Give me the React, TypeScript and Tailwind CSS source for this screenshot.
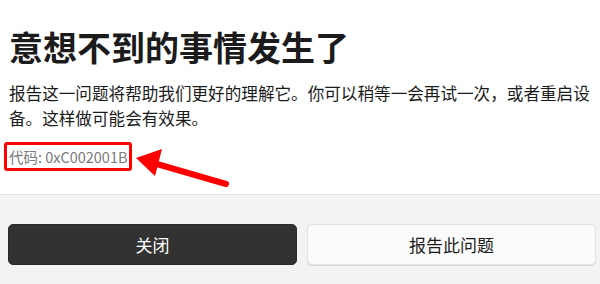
import React from "react";

export default function App() {
  const font = { fontFamily: '"Noto Sans CJK SC", "Noto Sans", sans-serif' };
  return (
    <div className="w-[600px] h-[284px] flex flex-col bg-white overflow-hidden" style={font}>
      <div className="relative h-[194px] pl-[9px] pr-[5px]">
        <h1 className="mt-[27px] text-[34px] leading-[40px] font-bold text-[#1b1b1b]">意想不到的事情发生了</h1>
        <p className="mt-[14px] text-[16.6px] leading-[25px] text-[#1b1b1b]">
          报告这一问题将帮助我们更好的理解它。你可以稍等一会再试一次，或者重启设备。这样做可能会有效果。
        </p>
        <div className="mt-[11px] flex">
          <div className="-ml-[5px] border-[3px] border-[#ff0000] rounded-[3px] px-[2px] h-[29px] flex items-center">
            <span className="text-[14.5px] leading-[20px] text-[#7a7a7a]">代码: 0xC002001B</span>
          </div>
        </div>
        <svg className="absolute left-[126px] top-[149px]" width="110" height="45" viewBox="0 0 110 45">
          <line x1="100" y1="35" x2="24" y2="13" stroke="#ff0000" strokeWidth="6" strokeLinecap="round" />
          <polygon points="10,9 36,0 29,27" fill="#ff0000" />
        </svg>
      </div>
      <div className="flex-1 bg-[#f3f3f3] border-t border-[#e3e3e3] pl-2 pr-1 pt-[29px] flex gap-[10px]">
        <button className="flex-1 h-[41px] rounded-[5px] bg-[#323232] text-white text-[17px] border border-[#2a2a2a]">关闭</button>
        <button className="flex-1 h-[41px] rounded-[5px] bg-[#fbfbfb] text-[#1b1b1b] text-[17px] border border-[#e2e2e2] shadow-[0_1px_0_#d8d8d8]">报告此问题</button>
      </div>
    </div>
  );
}
